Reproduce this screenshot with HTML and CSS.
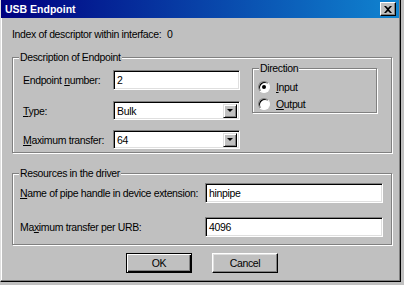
FILE: index.html
```html
<!DOCTYPE html>
<html>

<head>
  <title>USB Endpoint</title>
  <link rel="stylesheet" href="styles.css">
</head>

<body>
  <div class="window">
    <div class="titlebar">
      <span class="title">USB Endpoint</span>
      <span class="close">
        <svg width="8" height="7" viewBox="0 0 8 7">
          <path d="M0 0h2l2 2 2-2h2L5 3.5 8 7H6L4 5 2 7H0l3-3.5z" fill="#000"/>
        </svg>
      </span>
    </div>

    <div class="content">
      <div class="index-row">
        <span class="index-label">Index of descriptor within interface:</span>
        <span>0</span>
      </div>

      <!-- description group -->
      <div class="group group-desc">
        <span class="group-title">Description of Endpoint</span>
        <div class="desc-fields">
          <div class="field">
            <span class="label">Endpoint <u>n</u>umber:</span>
            <div class="edit">2</div>
          </div>
          <div class="field field-type">
            <span class="label"><u>T</u>ype:</span>
            <div class="edit combo">Bulk<span class="drop"><span class="arrow"></span></span></div>
          </div>
          <div class="field field-max">
            <span class="label"><u>M</u>aximum transfer:</span>
            <div class="edit combo">64<span class="drop"><span class="arrow"></span></span></div>
          </div>
        </div>

        <div class="group direction">
          <span class="group-title">Direction</span>
          <div class="radio-row">
            <span class="radio checked"></span>
            <span><u>I</u>nput</span>
          </div>
          <div class="radio-row">
            <span class="radio"></span>
            <span><u>O</u>utput</span>
          </div>
        </div>
      </div>

      <!-- resources group -->
      <div class="group group-res">
        <span class="group-title">Resources in the driver</span>
        <div class="field">
          <span class="label wide"><u>N</u>ame of pipe handle in device extension:</span>
          <div class="edit long">hinpipe</div>
        </div>
        <div class="field field-urb">
          <span class="label wide">Ma<u>x</u>imum transfer per URB:</span>
          <div class="edit long">4096</div>
        </div>
      </div>

      <div class="buttons">
        <div class="btn default">OK</div>
        <div class="btn">Cancel</div>
      </div>
    </div>
  </div>
</body>

</html>
```

FILE: styles.css
```css
body {
  margin: 0;
  background: #c0c0c0;
  font-family: "Liberation Sans", Arial, sans-serif;
  font-size: 10.5px;
  letter-spacing: -0.35px;
  color: #000;
  white-space: nowrap;
}

.window {
  width: 401px;
  height: 282px;
  box-sizing: border-box;
  background: #c0c0c0;
  border-right: 1px solid #000;
  border-bottom: 1px solid #000;
  border-left: 1px solid #dfdfdf;
  box-shadow: inset -1px -1px 0 #808080, inset 1px 0 0 #fff;
}

.titlebar {
  height: 18px;
  margin-right: 1px;
  display: flex;
  align-items: center;
  justify-content: space-between;
  background: linear-gradient(to right, #000080, #1084d0);
  padding: 0 3px 0 4px;
}

.title {
  font-weight: bold;
  font-size: 10.5px;
  letter-spacing: 0;
  color: #fff;
}

.close {
  width: 16px;
  height: 14px;
  box-sizing: border-box;
  background: #c0c0c0;
  display: flex;
  align-items: center;
  justify-content: center;
  border: 1px solid;
  border-color: #fff #000 #000 #fff;
  box-shadow: inset -1px -1px 0 #808080;
}

.content {
  padding: 0 8px 0 11px;
}

.index-row {
  display: flex;
  margin-top: 10px;
  line-height: 13px;
}

.index-label {
  width: 155px;
}

/* etched group box */
.group {
  position: relative;
  border: 1px solid #808080;
  box-shadow: 1px 1px 0 #fff, inset 1px 1px 0 #fff;
}

.group-title {
  position: absolute;
  top: -7px;
  left: 6px;
  padding: 0 1px;
  line-height: 13px;
  background: #c0c0c0;
}

.group-desc {
  margin-top: 16px;
  display: flex;
  align-items: flex-start;
  padding: 12px 0 3px 10px;
}

.field {
  display: flex;
  align-items: center;
}

.label {
  width: 90px;
}

.label.wide {
  width: 185px;
}

.field-type {
  margin-top: 11px;
}

.field-max {
  margin-top: 10px;
}

/* sunken edit box */
.edit {
  width: 127px;
  height: 20px;
  box-sizing: border-box;
  background: #fff;
  border: 1px solid;
  border-color: #808080 #fff #fff #808080;
  box-shadow: inset 1px 1px 0 #000, inset -1px -1px 0 #dfdfdf;
  padding: 0 0 0 3px;
  line-height: 18px;
  display: flex;
  align-items: center;
}

.combo {
  height: 19px;
  justify-content: space-between;
  padding-right: 2px;
}

.drop {
  width: 14px;
  height: 14px;
  box-sizing: border-box;
  background: #c0c0c0;
  border: 1px solid;
  border-color: #dfdfdf #000 #000 #dfdfdf;
  box-shadow: inset 1px 1px 0 #fff, inset -1px -1px 0 #808080;
  display: flex;
  align-items: center;
  justify-content: center;
}

.arrow {
  width: 0;
  height: 0;
  border-left: 3px solid transparent;
  border-right: 3px solid transparent;
  border-top: 3px solid #000;
}

.direction {
  width: 125px;
  height: 45px;
  box-sizing: border-box;
  margin: -2px 0 0 12px;
  padding: 9px 0 0 5px;
}

.radio-row {
  display: flex;
  align-items: center;
  gap: 6px;
  height: 17px;
}

.radio {
  width: 12px;
  height: 12px;
  box-sizing: border-box;
  border-radius: 50%;
  background: #fff;
  border: 1px solid;
  border-color: #808080 #fff #fff #808080;
  box-shadow: inset 1px 1px 0 #000;
  display: flex;
  align-items: center;
  justify-content: center;
}

.radio.checked::after {
  content: "";
  width: 4px;
  height: 4px;
  border-radius: 50%;
  background: #000;
}

.group-res {
  margin-top: 20px;
  padding: 9px 0 7px 7px;
}

.edit.long {
  width: 178px;
}

.field-urb {
  margin-top: 14px;
}

.buttons {
  display: flex;
  justify-content: center;
  gap: 20px;
  margin-top: 8px;
}

.btn {
  width: 66px;
  height: 20px;
  box-sizing: border-box;
  border: 1px solid;
  border-color: #fff #000 #000 #fff;
  box-shadow: inset -1px -1px 0 #808080, inset 1px 1px 0 #dfdfdf;
  display: flex;
  align-items: center;
  justify-content: center;
}

.btn.default {
  border: 1px solid #000;
  box-shadow: inset 1px 1px 0 #fff, inset -1px -1px 0 #000, inset -2px -2px 0 #808080;
}
```
